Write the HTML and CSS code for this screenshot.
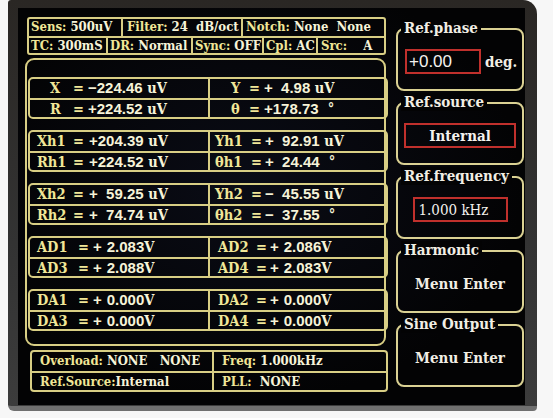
FILE: index.html
```html
<!DOCTYPE html>
<html>
<head>
<meta charset="utf-8">
<link rel="stylesheet" href="styles.css">
</head>
<body>
<div class="bezel">
  <div class="screen">
    <div class="left">
      <div class="status">
        <div class="srow">
          <div class="sc w-sens"><span class="k">Sens:</span> <span class="v">500uV</span></div>
          <div class="sc w-filter"><span class="k">Filter:</span> <span class="v">24  dB/oct</span></div>
          <div class="sc grow"><span class="k">Notch:</span> <span class="v">None  None</span></div>
        </div>
        <div class="srow">
          <div class="sc w-tc"><span class="k">TC:</span> <span class="v">300mS</span></div>
          <div class="sc w-dr"><span class="k">DR:</span> <span class="v">Normal</span></div>
          <div class="sc w-sync"><span class="k">Sync:</span> <span class="v">OFF</span></div>
          <div class="sc w-cpl"><span class="k">Cpl:</span> <span class="v">AC</span></div>
          <div class="sc grow"><span class="k">Src:</span>    <span class="v">A</span></div>
        </div>
      </div>

      <div class="panel">
        <div class="grp g1">
          <div class="gr">
            <div class="cl"><span class="lb">X</span><span class="eq">=</span><span class="num">−224.46</span><span class="un"> uV</span></div>
            <div class="cr"><span class="lb">Y</span><span class="eq">=</span><span class="num">+&#8199;4.98</span><span class="un"> uV</span></div>
          </div>
          <div class="gr">
            <div class="cl"><span class="lb">R</span><span class="eq">=</span><span class="num">+224.52</span><span class="un"> uV</span></div>
            <div class="cr"><span class="lb">θ</span><span class="eq">=</span><span class="num">+178.73</span><span class="un">  °</span></div>
          </div>
        </div>

        <div class="grp g2">
          <div class="gr">
            <div class="cl"><span class="lb">Xh1</span><span class="eq">=</span><span class="num">+204.39</span><span class="un"> uV</span></div>
            <div class="cr"><span class="lb">Yh1</span><span class="eq">=</span><span class="num">+&#8199;92.91</span><span class="un"> uV</span></div>
          </div>
          <div class="gr">
            <div class="cl"><span class="lb">Rh1</span><span class="eq">=</span><span class="num">+224.52</span><span class="un"> uV</span></div>
            <div class="cr"><span class="lb">θh1</span><span class="eq">=</span><span class="num">+&#8199;24.44</span><span class="un">  °</span></div>
          </div>
        </div>

        <div class="grp g2">
          <div class="gr">
            <div class="cl"><span class="lb">Xh2</span><span class="eq">=</span><span class="num">+&#8199;59.25</span><span class="un"> uV</span></div>
            <div class="cr"><span class="lb">Yh2</span><span class="eq">=</span><span class="num">−&#8199;45.55</span><span class="un"> uV</span></div>
          </div>
          <div class="gr">
            <div class="cl"><span class="lb">Rh2</span><span class="eq">=</span><span class="num">+&#8199;74.74</span><span class="un"> uV</span></div>
            <div class="cr"><span class="lb">θh2</span><span class="eq">=</span><span class="num">−&#8199;37.55</span><span class="un">  °</span></div>
          </div>
        </div>

        <div class="grp g3">
          <div class="gr">
            <div class="cl"><span class="lb">AD1</span><span class="eq">=</span><span class="num">+&#8196;2.083</span><span class="un">V</span></div>
            <div class="cr"><span class="lb">AD2</span><span class="eq">=</span><span class="num">+&#8196;2.086</span><span class="un">V</span></div>
          </div>
          <div class="gr">
            <div class="cl"><span class="lb">AD3</span><span class="eq">=</span><span class="num">+&#8196;2.088</span><span class="un">V</span></div>
            <div class="cr"><span class="lb">AD4</span><span class="eq">=</span><span class="num">+&#8196;2.083</span><span class="un">V</span></div>
          </div>
        </div>

        <div class="grp g3">
          <div class="gr">
            <div class="cl"><span class="lb">DA1</span><span class="eq">=</span><span class="num">+&#8196;0.000</span><span class="un">V</span></div>
            <div class="cr"><span class="lb">DA2</span><span class="eq">=</span><span class="num">+&#8196;0.000</span><span class="un">V</span></div>
          </div>
          <div class="gr">
            <div class="cl"><span class="lb">DA3</span><span class="eq">=</span><span class="num">+&#8196;0.000</span><span class="un">V</span></div>
            <div class="cr"><span class="lb">DA4</span><span class="eq">=</span><span class="num">+&#8196;0.000</span><span class="un">V</span></div>
          </div>
        </div>
      </div>

      <div class="foot">
        <div class="gr">
          <div class="fl"><span class="k">Overload:</span> <span class="v">NONE   NONE</span></div>
          <div class="fr"><span class="k">Freq:</span> <span class="v">1.000kHz</span></div>
        </div>
        <div class="gr">
          <div class="fl"><span class="k">Ref.Source:</span><span class="v">Internal</span></div>
          <div class="fr"><span class="k">PLL:</span>  <span class="v">NONE</span></div>
        </div>
      </div>
    </div>

    <div class="right">
      <div class="box">
        <div class="ttl">Ref.phase</div>
        <div class="box-body phase">
          <div class="red red-phase">+0.00</div>
          <span class="deg">deg.</span>
        </div>
      </div>
      <div class="box">
        <div class="ttl">Ref.source</div>
        <div class="box-body">
          <div class="red red-src">Internal</div>
        </div>
      </div>
      <div class="box">
        <div class="ttl">Ref.frequency</div>
        <div class="box-body">
          <div class="red red-freq">1.000 kHz</div>
        </div>
      </div>
      <div class="box">
        <div class="ttl">Harmonic</div>
        <div class="box-body"><span class="menu">Menu Enter</span></div>
      </div>
      <div class="box">
        <div class="ttl">Sine Output</div>
        <div class="box-body"><span class="menu">Menu Enter</span></div>
      </div>
    </div>
  </div>
</div>
</body>
</html>
```

FILE: styles.css
```css
* { box-sizing: border-box; }

body {
  margin: 0;
  background: #f7f7f7;
  font-family: "DejaVu Serif Condensed", "DejaVu Serif", serif;
  font-stretch: condensed;
  font-weight: bold;
}

.bezel {
  margin-left: 8px;
  width: 529px;
  height: 411px;
  padding: 8px 12px 1px 10px;
  background: linear-gradient(180deg, #2a2724 0%, #333 60%, #3c3c3c 100%);
  border-bottom: 5px solid #707070;
  border-radius: 3px 14px 4px 6px;
}

.screen {
  height: 397px;
  display: flex;
  gap: 8px;
  padding: 9px 1px 0 7px;
  background: radial-gradient(ellipse at 45% 45%, #0a0c16 0%, #030304 70%);
}

.left {
  width: 363px;
  display: flex;
  flex-direction: column;
}

/* status bar */
.status {
  margin-left: 2px;
  width: 359px;
  height: 38px;
  border: 2px solid #d8ce84;
  border-radius: 3px;
}
.srow {
  display: flex;
  height: 17px;
}
.srow + .srow { border-top: 2px solid #d8ce84; }
.sc {
  white-space: pre;
  font-size: 13px;
  line-height: 16px;
  padding-left: 2px;
  border-right: 2px solid #d8ce84;
  overflow: hidden;
}
.sc.grow { flex: 1; border-right: 0; padding-left: 3px; }
.w-sens { width: 94px; }
.w-filter { width: 120px; padding-left: 4px; }
.w-tc { width: 79px; }
.w-dr { width: 85px; padding-left: 2px; }
.w-sync { width: 71px; padding-left: 2px; }
.w-cpl { width: 54px; padding-left: 2px; }

.k { color: #f0e697; }
.v { color: #f6f3d8; }

/* main panel */
.panel {
  margin-top: 3px;
  width: 361px;
  height: 288px;
  border: 2px solid #d8ce84;
  border-radius: 9px;
  padding-top: 17px;
}
.grp {
  margin-left: 1px;
  width: 360px;
  height: 42px;
  border: 2px solid #d8ce84;
  border-radius: 5px;
  margin-bottom: 11px;
}
.gr {
  display: flex;
  height: 19px;
}
.gr + .gr {
  border-top: 2px solid #d8ce84;
}
.cl, .cr, .fl, .fr {
  white-space: pre;
  font-size: 14.5px;
  line-height: 18px;
  color: #f0e697;
}
.cl {
  width: 180px;
  border-right: 2px solid #d8ce84;
}
.cr { flex: 1; }

.lb, .eq { display: inline-block; }
.num {
  font-family: "Liberation Sans", "DejaVu Sans", sans-serif;
  font-stretch: normal;
  font-weight: bold;
  font-size: 15px;
  color: #f6f3d8;
}
.un { color: #f6f3d8; }

.g1 .cl { padding-left: 20px; }
.g1 .cl .lb { width: 23px; }
.g1 .cl .eq { width: 15px; }
.g1 .cr { padding-left: 21px; }
.g1 .cr .lb { width: 18px; }
.g1 .cr .eq { width: 15px; }

.g2 .cl { padding-left: 7px; }
.g2 .cl .lb { width: 36px; }
.g2 .cl .eq { width: 16px; }
.g2 .cr { padding-left: 5px; }
.g2 .cr .lb { width: 36px; }
.g2 .cr .eq { width: 14px; }

.g3 .cl { padding-left: 7px; }
.g3 .cl .lb { width: 41px; }
.g3 .cl .eq { width: 15px; }
.g3 .cr { padding-left: 8px; }
.g3 .cr .lb { width: 38px; }
.g3 .cr .eq { width: 14px; }

/* footer box */
.foot {
  margin-top: 4px;
  margin-left: 5px;
  width: 358px;
  height: 42px;
  border: 2px solid #d8ce84;
  border-radius: 4px;
}
.fl, .fr { font-size: 13px; }
.fl {
  width: 182px;
  padding-left: 8px;
  border-right: 2px solid #d8ce84;
}
.fr { flex: 1; padding-left: 8px; }

/* right column */
.right {
  width: 128px;
  margin-top: 11px;
  display: flex;
  flex-direction: column;
  gap: 11px;
}
.box {
  position: relative;
  height: 63px;
  border: 2px solid #dad193;
  border-radius: 8px;
}
.ttl {
  position: absolute;
  top: -11px;
  left: 3px;
  padding: 0 3px;
  background: #030304;
  color: #f1eee4;
  font-size: 15px;
  line-height: 18px;
  white-space: nowrap;
}
.box-body {
  height: 100%;
  display: flex;
  align-items: center;
  justify-content: center;
  padding-top: 4px;
  color: #f1eee4;
}
.box-body.phase {
  justify-content: flex-start;
  padding-left: 7px;
}
.red {
  border: 2px solid #c0302c;
  height: 25px;
  display: flex;
  align-items: center;
  color: #f4f2ee;
}
.red-phase {
  width: 76px;
  padding-left: 2px;
  font-family: "Liberation Sans", "DejaVu Sans", sans-serif;
  font-stretch: normal;
  font-weight: normal;
  font-size: 17px;
}
.deg {
  margin-left: 4px;
  font-size: 15px;
}
.red-src {
  width: 112px;
  justify-content: center;
  font-size: 15px;
}
.red-freq {
  width: 95px;
  padding-left: 4px;
  font-size: 15px;
  font-weight: normal;
}
.menu {
  font-size: 15px;
}
```
